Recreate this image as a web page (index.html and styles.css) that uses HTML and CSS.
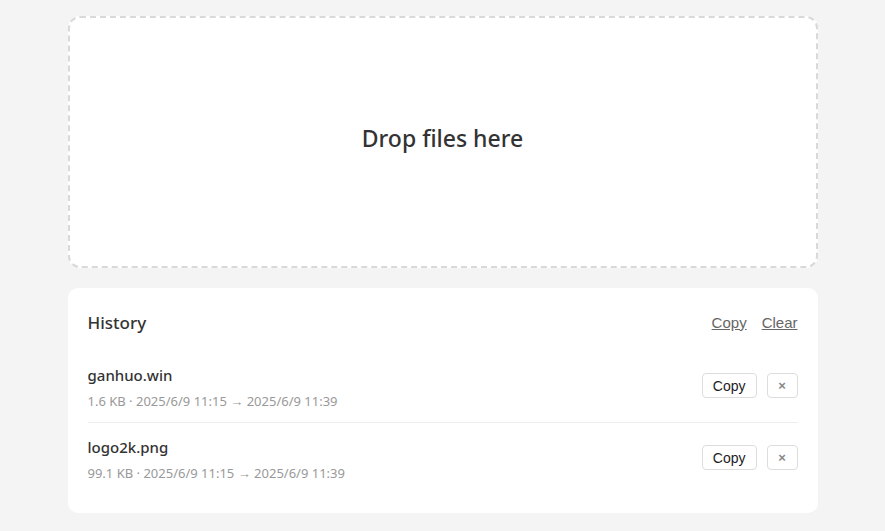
FILE: index.html
```html
<!DOCTYPE html>
<html lang="en">
<head>
  <meta charset="UTF-8" />
  <meta name="viewport" content="width=device-width, initial-scale=1.0"/>
  <title>Drop files</title>
  <link rel="stylesheet" href="styles.css">
</head>
<body>
  <div class="wrap">
    <div class="drop">Drop files here</div>

    <div class="history">
      <div class="history-head">
        <h2>History</h2>
        <div class="links">
          <a href="#">Copy</a>
          <a href="#">Clear</a>
        </div>
      </div>

      <div class="item">
        <div class="info">
          <div class="name">ganhuo.win</div>
          <div class="meta">1.6 KB · 2025/6/9 11:15 → 2025/6/9 11:39</div>
        </div>
        <div class="actions">
          <button class="btn">Copy</button>
          <button class="btn del">×</button>
        </div>
      </div>

      <div class="item">
        <div class="info">
          <div class="name">logo2k.png</div>
          <div class="meta">99.1 KB · 2025/6/9 11:15 → 2025/6/9 11:39</div>
        </div>
        <div class="actions">
          <button class="btn">Copy</button>
          <button class="btn del">×</button>
        </div>
      </div>
    </div>
  </div>
</body>
</html>
```

FILE: styles.css
```css
body {
  margin: 0;
  background-color: #f4f4f4;
  font-family: "Noto Sans", "Open Sans", sans-serif;
  color: #333;
}
.wrap {
  max-width: 750px;
  margin: 0 auto;
  padding: 16px 0;
}
.drop {
  height: 240px;
  padding-bottom: 8px;
  background-color: #fff;
  border: 2px dashed #d9d9d9;
  border-radius: 12px;
  display: flex;
  align-items: center;
  justify-content: center;
  font-size: 23px;
  font-weight: 500;
  color: #333;
}
.history {
  margin-top: 20px;
  background-color: #fff;
  border-radius: 10px;
  padding: 20px 20px 19px;
}
.history-head {
  display: flex;
  justify-content: space-between;
  align-items: center;
  height: 28px;
  margin-bottom: 15px;
}
.history-head h2 {
  margin: 0;
  font-size: 17px;
  font-weight: 500;
}
.links {
  display: flex;
  gap: 15px;
}
.links a {
  font-family: "Liberation Sans", Arial, sans-serif;
  font-size: 15px;
  color: #666;
}
.item {
  display: flex;
  align-items: center;
  justify-content: space-between;
  padding: 12px 0;
  border-bottom: 1px solid #eee;
}
.item:last-child {
  border-bottom: none;
}
.name {
  font-size: 15px;
  line-height: 24px;
  font-weight: 500;
}
.meta {
  margin-top: 5px;
  font-size: 13px;
  line-height: 18px;
  color: #999;
}
.actions {
  display: flex;
  gap: 10px;
  margin-bottom: 2px;
}
.btn {
  font-family: "Liberation Sans", Arial, sans-serif;
  font-size: 14px;
  color: #222;
  background-color: #fff;
  border: 1px solid #ddd;
  border-radius: 4px;
  height: 25px;
  padding: 0 10px;
  cursor: pointer;
}
.btn.del {
  width: 31px;
  padding: 0;
  color: #888;
  font-size: 13px;
  font-weight: bold;
}
```
